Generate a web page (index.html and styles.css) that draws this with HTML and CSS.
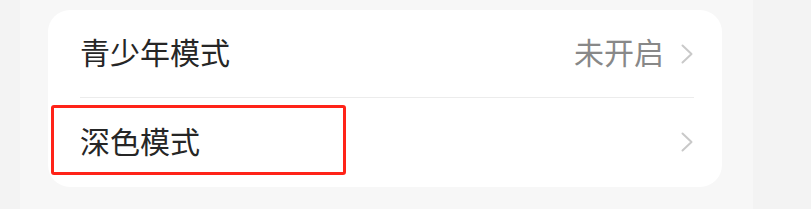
FILE: index.html
```html
<!DOCTYPE html>
<html>
<head>
    <meta charset="utf-8">
    <link rel="stylesheet" href="styles.css">
</head>
<body>
    <div class="page">
        <div class="card">
            <div class="row">
                <span class="row-title">青少年模式</span>
                <span class="row-value">未开启</span>
                <svg class="chevron" width="12" height="20" viewBox="0 0 12 20">
                    <path d="M1.5 1.5 L10.5 10 L1.5 18.5" fill="none" stroke="#c9c9c9" stroke-width="2" stroke-linecap="round" stroke-linejoin="round"/>
                </svg>
            </div>
            <div class="divider"></div>
            <div class="row row-marked">
                <span class="row-title">深色模式</span>
                <svg class="chevron" width="12" height="20" viewBox="0 0 12 20">
                    <path d="M1.5 1.5 L10.5 10 L1.5 18.5" fill="none" stroke="#c9c9c9" stroke-width="2" stroke-linecap="round" stroke-linejoin="round"/>
                </svg>
                <div class="highlight"></div>
            </div>
        </div>
    </div>
</body>
</html>
```

FILE: styles.css
```css
body {
    margin: 0;
    background-color: #f3f3f3;
    font-family: "Noto Sans CJK SC", "Noto Sans", sans-serif;
}

.page {
    margin-left: 20px;
    width: 733px;
    height: 209px;
    padding-top: 10px;
    box-sizing: border-box;
    background-color: #f7f7f7;
}

.card {
    margin-left: 28px;
    width: 674px;
    background-color: #fff;
    border-radius: 22px;
}

.row {
    position: relative;
    display: flex;
    align-items: center;
    height: 87px;
    padding: 0 29px 5px 32px;
    box-sizing: border-box;
    line-height: 1;
}

.row-marked {
    height: 89px;
    padding-bottom: 6px;
}

.row-title {
    flex: 1;
    font-size: 30px;
    color: #262626;
}

.row-value {
    font-size: 30px;
    color: #888;
    margin-right: 17px;
}

.chevron {
    display: block;
    margin-top: 5px;
}

.divider {
    height: 1px;
    margin: 0 28px 0 32px;
    background-color: #ececec;
}

.highlight {
    position: absolute;
    left: 3px;
    top: 7px;
    width: 289px;
    height: 64px;
    border: 3px solid #ff2318;
    border-radius: 3px;
}
```
